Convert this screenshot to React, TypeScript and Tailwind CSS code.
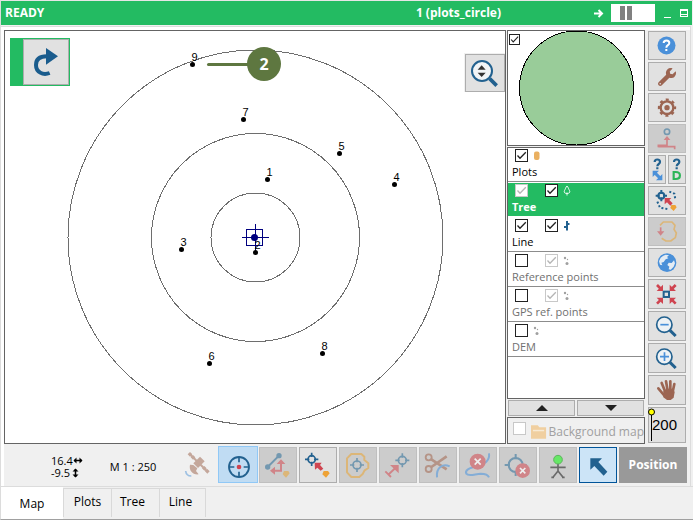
import React, { useId } from "react";
import { FaWrench } from "react-icons/fa";

const BLUE = "#22618f";
const RED = "#cf4450";
const ORANGE = "#eea236";
const SKY = "#4a90d9";
const BROWN = "#9c6552";

type Kids = { children?: React.ReactNode };

/* ---------- building blocks ---------- */

function Icon({ box, children }: { box: string } & Kids) {
  return (
    <svg viewBox={box} className="h-full w-full" fill="none" aria-hidden="true">
      {children}
    </svg>
  );
}

function SideButton({ label, off, size = "h-[29px]", children }: { label: string; off?: boolean; size?: string } & Kids) {
  return (
    <button
      aria-label={label}
      disabled={off}
      className={`flex min-w-0 flex-1 shrink-0 items-center justify-center border ${size} ${
        off ? "border-[#bfbfbf] bg-[#cccccc]" : "border-[#adadad] bg-[#e1e1e1]"
      }`}
    >
      {children}
    </button>
  );
}

function ToolButton({ label, off, children }: { label: string; off?: boolean } & Kids) {
  return (
    <button
      aria-label={label}
      disabled={off}
      className={`h-9 w-[38px] border ${off ? "border-[#bfbfbf] bg-[#cccccc]" : "border-[#adadad] bg-[#e1e1e1]"}`}
    >
      {children}
    </button>
  );
}

function Cross({ x, y, r, t, w = 5, color = BLUE }: { x: number; y: number; r: number; t: number; w?: number; color?: string }) {
  return (
    <g stroke={color} strokeWidth={w}>
      <circle cx={x} cy={y} r={r} />
      <path d={`M${x} ${y - t}V${y - r + 4}M${x} ${y + r - 4}V${y + t}M${x - t} ${y}H${x - r + 4}M${x + r - 4} ${y}H${x + t}`} />
    </g>
  );
}

function Check({ id, label, checked, faded, small }: { id?: string; label?: string; checked?: boolean; faded?: boolean; small?: boolean }) {
  return (
    <span className={`grid shrink-0 ${small ? "size-[11px]" : "size-[13px]"}`}>
      <input
        id={id}
        aria-label={label}
        type="checkbox"
        defaultChecked={checked}
        disabled={faded}
        className={`peer col-start-1 row-start-1 h-full w-full appearance-none border bg-white ${
          faded ? "border-[#c8c8c8]" : "border-[#222222]"
        }`}
      />
      <svg viewBox="0 0 13 13" className="pointer-events-none invisible col-start-1 row-start-1 peer-checked:visible" fill="none">
        <path d="M2.5 6.5L5 9.3L10.8 3.2" stroke={faded ? "#b5b5b5" : "#222222"} strokeWidth="1.3" />
      </svg>
    </span>
  );
}

/* ---------- title bar ---------- */

function TitleBar() {
  return (
    <header className="mr-px flex h-6 items-center bg-[#23bb62] pr-1 pl-1 text-xs leading-4 font-bold text-white">
      <h1>READY</h1>
      <span className="ml-auto">1 (plots_circle)</span>
      <svg viewBox="0 0 10 9" className="ml-[93px] h-[9px] w-2.5" fill="none">
        <path d="M0 4.5H8M4.5 1L8 4.5L4.5 8" stroke="white" strokeWidth="2" />
      </svg>
      <button aria-label="Pause" className="ml-[7px] flex h-[18px] w-11 gap-0.5 bg-white py-0.5 pl-[9px]">
        <span className="h-full w-[5px] bg-[#808080]" />
        <span className="h-full w-[5px] bg-[#808080]" />
      </button>
      <button aria-label="Minimise" className="ml-[9px] flex h-[9px] w-[7px] items-end">
        <span className="h-px w-full bg-white" />
      </button>
      <button aria-label="Restore" className="ml-[9px] h-2 w-2 border border-t-2 border-white">
        <span className="mt-px block h-px w-full bg-white" />
      </button>
    </header>
  );
}

/* ---------- map ---------- */

const trees = [
  { n: 9, x: 187.5, y: 33.5 },
  { n: 7, x: 238.5, y: 88.5 },
  { n: 1, x: 262.5, y: 148.5 },
  { n: 5, x: 334.5, y: 122.5 },
  { n: 4, x: 389.5, y: 153.5 },
  { n: 3, x: 176.5, y: 218.5 },
  { n: 2, x: 250.5, y: 221.5 },
  { n: 6, x: 204.5, y: 332.5 },
  { n: 8, x: 317.5, y: 322.5 },
];

function MapView() {
  return (
    <main className="relative min-w-0 flex-1 border border-[#646464] bg-white">
      <svg viewBox="0 0 500 412" className="h-full w-full" fill="none">
        <g stroke="#6e6e6e" shapeRendering="crispEdges">
          <circle cx="250.5" cy="206.5" r="44.5" />
          <circle cx="250.5" cy="206.5" r="104" />
          <circle cx="250.5" cy="206.5" r="187.5" />
        </g>
        <g stroke="#00007f">
          <path d="M237 206.5H264M250.5 193V220" />
          <rect x="241.5" y="198.5" width="16" height="16" />
        </g>
        <circle cx="249.5" cy="206.5" r="3.5" fill="#00007f" />
        {trees.map((t) => (
          <g key={t.n} fill="black">
            <circle cx={t.x} cy={t.y} r="2.5" />
            <text x={t.x + 2} y={t.y - 3.5} textAnchor="middle" className="font-['Liberation_Sans',sans-serif] text-[11px]">
              {t.n}
            </text>
          </g>
        ))}
        <path d="M203.5 33.5H245" stroke="#5e7740" strokeWidth="3" strokeLinecap="round" />
        <circle cx="259" cy="33" r="17" fill="#5e7740" />
        <text x="259" y="39" textAnchor="middle" fill="white" className="text-base font-bold">
          2
        </text>
      </svg>

      <div className="absolute top-[7px] left-[5px] bg-[#23bb62] py-px pr-px pl-[13px]">
        <button aria-label="Redo" className="block h-[46px] w-[46px] border border-[#adadad] bg-[#e1e1e1]">
          <Icon box="72 120 132 132">
            <path d="M149 219C128 227 108 216 108 195C108 176 120 169 140 169" stroke="#1a5c8d" strokeWidth="12" />
            <path d="M138 144L174 169L138 194Z" fill="#1a5c8d" />
          </Icon>
        </button>
      </div>

      <div className="absolute top-[22px] right-0 bg-[#f0f0f0] pt-px pl-px">
        <button aria-label="Zoom to layer" className="block h-[38px] w-10 border border-[#adadad] bg-[#e1e1e1]">
          <Icon box="198 165 114 108">
            <circle cx="246" cy="213" r="30" stroke={BLUE} strokeWidth="6" fill="#f1f4f6" />
            <path d="M269 236L290 257" stroke={BLUE} strokeWidth="11" />
            <path d="M233 209L245 196L257 209ZM233 218L245 231L257 218Z" fill="#333333" />
          </Icon>
        </button>
      </div>
    </main>
  );
}

/* ---------- layer panel ---------- */

function PlotGlyph() {
  return (
    <svg viewBox="0 0 8 11" className="h-[11px] w-2">
      <rect x="1" y="1.5" width="5.5" height="8.5" rx="2" fill="#eab060" />
    </svg>
  );
}
function TreeGlyph() {
  return (
    <svg viewBox="0 0 8 11" className="h-[11px] w-2" fill="none" stroke="white">
      <path d="M4 1C2.5 2.5 2.5 4 1.5 5.5C.5 7.5 2 8.5 4 8.5C6 8.5 7.5 7.5 6.5 5.5C5.5 4 5.5 2.5 4 1ZM4 7.5V10.5" strokeWidth=".9" />
    </svg>
  );
}
function LineGlyph() {
  return (
    <svg viewBox="0 0 8 11" className="h-[11px] w-2" fill="none" stroke={BLUE}>
      <path d="M4 1V10.5" strokeWidth="2" />
      <path d="M1 7H4M4 4H6.5" strokeWidth="2" />
    </svg>
  );
}
function DotsGlyph() {
  return (
    <svg viewBox="0 0 8 11" className="h-[11px] w-2" fill="#a0a0a0">
      <circle cx="2" cy="3" r="1.2" />
      <circle cx="4.5" cy="4.5" r=".7" />
      <circle cx="4" cy="8.5" r="1.5" />
    </svg>
  );
}

type Layer = {
  name: string;
  shown?: boolean;
  locked?: boolean;
  labels?: "on" | "faded";
  current?: boolean;
  dim?: boolean;
  glyph: React.ReactNode;
};

const layers: Layer[] = [
  { name: "Plots", shown: true, glyph: <PlotGlyph /> },
  { name: "Tree", shown: true, locked: true, labels: "on", current: true, glyph: <TreeGlyph /> },
  { name: "Line", shown: true, labels: "on", glyph: <LineGlyph /> },
  { name: "Reference points", labels: "faded", dim: true, glyph: <DotsGlyph /> },
  { name: "GPS ref. points", labels: "faded", dim: true, glyph: <DotsGlyph /> },
  { name: "DEM", dim: true, glyph: <DotsGlyph /> },
];

function LayerRow({ layer }: { layer: Layer }) {
  const id = useId();
  return (
    <li
      className={`h-[35px] pl-[7px] first:h-[34px] first:pt-px ${
        layer.current ? "border-y border-white bg-[#23bb62] pt-px font-bold text-white" : "border-b border-[#8c8c8c] pt-0.5"
      } ${layer.dim ? "text-[#707070]" : ""}`}
    >
      <div className="flex h-[15px] items-start">
        <Check id={id} checked={layer.shown} faded={layer.locked} />
        {layer.labels && (
          <span className="ml-[17px]">
            <Check label={`${layer.name} labels`} checked faded={layer.labels === "faded"} />
          </span>
        )}
        <span className="mt-px ml-[5px]">{layer.glyph}</span>
      </div>
      <label htmlFor={id} className="-ml-[3px] block text-[11px] leading-4">
        {layer.name}
      </label>
    </li>
  );
}

function LayerPanel() {
  return (
    <aside className="flex w-[138px] shrink-0 flex-col gap-px">
      <div className="flex h-[116px] items-start border border-[#646464] bg-white">
        <span className="mt-[3px] ml-px">
          <Check label="Show overview" checked small />
        </span>
        <svg viewBox="0 0 116 114" className="-ml-px h-[114px] w-[116px]">
          <circle cx="57.5" cy="57" r="57" fill="#99cc99" stroke="black" shapeRendering="crispEdges" />
        </svg>
      </div>
      <ul className="flex-1 border border-[#646464] bg-white">
        {layers.map((l) => (
          <LayerRow key={l.name} layer={l} />
        ))}
      </ul>
      <div className="flex gap-0.5 px-px">
        <button aria-label="Move up" className="flex h-4 flex-1 items-center justify-center border border-[#adadad] bg-[#e1e1e1]">
          <svg viewBox="0 0 12 6" className="h-1.5 w-3">
            <path d="M0 6L6 0L12 6Z" fill="#222222" />
          </svg>
        </button>
        <button aria-label="Move down" className="flex h-4 flex-1 items-center justify-center border border-[#adadad] bg-[#e1e1e1]">
          <svg viewBox="0 0 12 6" className="h-1.5 w-3">
            <path d="M0 0L6 6L12 0Z" fill="#222222" />
          </svg>
        </button>
      </div>
      <div className="flex h-[27px] items-start border border-[#646464] pt-1 pl-[5px] text-[#a0a0a0]">
        <Check id="background" faded />
        <svg viewBox="0 0 16 14" className="mt-[3px] ml-[5px] h-3.5 w-4">
          <path d="M0 0H7L8.5 2H15.5V14H0Z" fill="#f0cfa0" />
          <path d="M2 5.5H13.5" stroke="#f8ead4" strokeWidth="1.5" />
        </svg>
        <label htmlFor="background" className="mt-0.5 ml-0.5 leading-4 whitespace-nowrap">
          Background map
        </label>
      </div>
    </aside>
  );
}

/* ---------- right tool column ---------- */

function SideTools() {
  return (
    <nav aria-label="Map tools" className="flex w-[38px] shrink-0 flex-col pt-px">
      <div className="flex flex-col gap-0.5">
        <div className="flex">
          <SideButton label="Help">
            <Icon box="15 18 108 81">
              <circle cx="67.5" cy="58.5" r="27" fill={SKY} />
              <path d="M59 51C59 41 76 41 76 51C76 58 67 57 67 65M67 69V75" stroke="white" strokeWidth="6" />
            </Icon>
          </SideButton>
        </div>
        <div className="flex">
          <SideButton label="Settings">
            <FaWrench size={18} color={BROWN} />
          </SideButton>
        </div>
        <div className="flex">
          <SideButton label="Configuration">
            <Icon box="15 204 108 81">
              <g stroke={BROWN}>
                <circle cx="69" cy="245" r="19" strokeWidth="7" />
                <circle cx="69" cy="245" r="24" strokeWidth="7" strokeDasharray="9 9.85" strokeDashoffset="4.5" />
              </g>
              <circle cx="69" cy="245" r="8" fill={BROWN} />
            </Icon>
          </SideButton>
        </div>
        <div className="flex">
          <SideButton label="Snap to node" off>
            <Icon box="15 297 108 81">
              <circle cx="69" cy="317" r="8" stroke="#7398b0" strokeWidth="5" />
              <path d="M43 364V358H69V339M43 362H92V370" stroke="#d08488" strokeWidth="5" />
              <path d="M59 342L69 330L79 342Z" fill="#d08488" />
            </Icon>
          </SideButton>
        </div>
        <div className="flex gap-0.5">
          <SideButton label="Measure distance">
            <Icon box="15 390 48 81">
              <path d="M32 408C32 398 48 398 48 408C48 415 40 413 40 421M40 424V430" stroke={BLUE} strokeWidth="6.5" />
              <path d="M26 434H45L26 453ZM55 463V444L36 463Z" fill={SKY} />
              <path d="M32 440L49 457" stroke={SKY} strokeWidth="9" />
            </Icon>
          </SideButton>
          <SideButton label="Measure diameter">
            <Icon box="75 390 48 81">
              <path d="M90 408C90 398 106 398 106 408C106 415 98 413 98 421M98 424V430" stroke={BLUE} strokeWidth="6.5" />
              <path d="M89 438V459H95C112 459 112 438 95 438Z" stroke="#2cb558" strokeWidth="6.5" />
            </Icon>
          </SideButton>
        </div>
        <div className="flex">
          <SideButton label="Select by position">
            <Icon box="447 141 108 81">
              <Cross x={484} y={167} r={9} t={17} w={6} />
              <path d="M508 155L523 161L526 178M472 185L480 203L502 207" stroke={BLUE} strokeWidth="6" strokeDasharray="6 6" />
              <path d="M494 174H514L508 180L518 190L511 197L501 187L494 193Z" fill={RED} />
              <path d="M514 195H526L530 202L521 213L511 204Z" fill={ORANGE} />
            </Icon>
          </SideButton>
        </div>
        <div className="flex">
          <SideButton label="Add to polygon" off>
            <Icon box="447 234 108 81">
              <path d="M480 256L490 246H516L525 256L522 268L529 279L526 293L512 303H498L485 295" stroke="#dcb678" strokeWidth="5" strokeLinejoin="round" />
              <path d="M482 262V276" stroke="#d08488" strokeWidth="5" />
              <path d="M471 274H493L482 287Z" fill="#d08488" />
            </Icon>
          </SideButton>
        </div>
        <div className="flex">
          <SideButton label="Whole world">
            <Icon box="447 327 108 81">
              <circle cx="501" cy="368" r="28" fill={SKY} />
              <path
                d="M497 344L507 346L501 351L505 355L497 358L491 366L484 368L487 376L480 374L477 364L482 353L490 347ZM522 361L525 370L521 380L512 389L506 388L508 380L502 375L506 368L515 369Z"
                fill="#e4ecf4"
              />
            </Icon>
          </SideButton>
        </div>
        <div className="flex">
          <SideButton label="Centre view" size="h-[30px]">
            <Icon box="447 60 108 84">
              <rect x="491" y="95" width="16" height="16" stroke={BLUE} strokeWidth="6" />
              <path d="M471 75L483 87M527 75L515 87M471 131L483 119M527 131L515 119" stroke={RED} strokeWidth="8" />
              <path d="M489 74V93H470ZM509 74V93H528ZM489 132V113H470ZM509 132V113H528Z" fill={RED} />
            </Icon>
          </SideButton>
        </div>
        <div className="flex">
          <SideButton label="Zoom out" size="h-[30px]">
            <Icon box="447 156 108 84">
              <circle cx="493" cy="194" r="23" stroke={BLUE} strokeWidth="5" fill="#eef2f5" />
              <path d="M510 211L527 228" stroke={BLUE} strokeWidth="9" />
              <path d="M481 194H506" stroke={SKY} strokeWidth="5" />
            </Icon>
          </SideButton>
        </div>
        <div className="flex">
          <SideButton label="Zoom in" size="h-[30px]">
            <Icon box="447 252 108 84">
              <circle cx="493" cy="290" r="23" stroke={BLUE} strokeWidth="5" fill="#eef2f5" />
              <path d="M510 307L527 324" stroke={BLUE} strokeWidth="9" />
              <path d="M480 290H507M493.5 277V303" stroke={SKY} strokeWidth="5" />
            </Icon>
          </SideButton>
        </div>
        <div className="flex">
          <SideButton label="Pan" size="h-[30px]">
            <Icon box="447 -12 108 84">
              <path d="M485 9L496 36M498 4L503 32M511 4V32M523 12L518 36M475 25L494 48" stroke={BROWN} strokeWidth="8" strokeLinecap="round" />
              <path d="M490 34L500 26H518L524 36L521 53L512 60H501L490 52Z" fill={BROWN} />
            </Icon>
          </SideButton>
        </div>
        <button className="relative h-9 border border-[#adadad] bg-[#e1e1e1] pl-[3px] text-left font-['Liberation_Sans',sans-serif] text-[15px]">
          <svg viewBox="0 0 8 34" className="absolute top-0 -left-px h-[34px] w-2">
            <path d="M3.5 4V33" stroke="black" />
            <circle cx="3.5" cy="4" r="3" fill="#ffff00" stroke="black" />
          </svg>
          200
        </button>
      </div>
    </nav>
  );
}

/* ---------- bottom tool bar ---------- */

function BottomBar() {
  return (
    <div className="flex items-center gap-0.5 pt-0.5 pr-[3px] pb-[3px]">
      <div className="flex min-w-0 flex-1 items-center pt-1 pl-[47px]">
        <div className="text-[11px] leading-3">
          <div className="flex items-center">
            16.4
            <svg viewBox="0 0 10 7" className="h-[7px] w-2.5" fill="none" stroke="black">
              <path d="M1 3.5H9" strokeWidth="1.5" />
              <path d="M3.5 .5L.5 3.5L3.5 6.5ZM6.5 .5L9.5 3.5L6.5 6.5Z" fill="black" stroke="none" />
            </svg>
          </div>
          <div className="flex items-center">
            -9.5
            <svg viewBox="0 0 7 10" className="ml-0.5 h-2.5 w-[7px]" fill="none" stroke="black">
              <path d="M3.5 1V9" strokeWidth="1.5" />
              <path d="M.5 3.5L3.5 .5L6.5 3.5ZM.5 6.5L3.5 9.5L6.5 6.5Z" fill="black" stroke="none" />
            </svg>
          </div>
        </div>
        <span className="ml-[27px] text-[11px] leading-4 whitespace-nowrap">M 1 : 250</span>
      </div>
      <button aria-label="GPS" disabled className="mr-[3px] size-[30px]">
        <Icon box="9 33 90 90">
          <g fill="#c4a79b">
            <path d="M30 39L37 46L30 53L23 46ZM39 48L46 55L39 62L32 55ZM73 81L80 88L73 95L66 88ZM82 90L89 97L82 104L75 97Z" />
            <path d="M60 53L74 67L54 87L40 73Z" />
            <path d="M30 77C26 94 38 108 56 106L48 96L52 88L40 78Z" />
          </g>
          <path d="M32 48L80 95" stroke="#c4a79b" strokeWidth="6" />
          <path d="M17 96C18 105 24 111 34 111" stroke="#9dc0e2" strokeWidth="5" />
        </Icon>
      </button>
      <div className="flex items-end gap-0.5">
        <button aria-label="Aim" className="-mr-px h-[37px] w-10 border border-[#90c8f6] bg-[#c0dcf3]">
          <Icon box="117 21 114 105">
            <circle cx="177" cy="81" r="30" stroke={BLUE} strokeWidth="5.5" />
            <path d="M177 51V67M177 95V111M147 81H163M191 81H207" stroke={BLUE} strokeWidth="5" />
            <circle cx="177" cy="81" r="7" fill={RED} />
          </Icon>
        </button>
        <ToolButton label="Move node" off>
          <Icon box="240 24 108 102">
            <path d="M263 81L297 47" stroke="#7398b0" strokeWidth="6" />
            <circle cx="263" cy="81" r="8" fill="#7398b0" />
            <circle cx="297" cy="47" r="8" fill="#7398b0" />
            <path d="M280 92H303V68" stroke="#d08488" strokeWidth="6" />
            <path d="M285 80V104L270 92ZM290 72H316L303 58Z" fill="#d08488" />
            <path d="M312 93H325L329 100L318 113L308 103Z" fill="#dcb678" />
          </Icon>
        </ToolButton>
        <ToolButton label="Add tree">
          <Icon box="360 24 108 102">
            <Cross x={395} y={58} r={11} t={20} />
            <path d="M404 68H425L420 75L430 86L422 92L412 83L405 89Z" fill={RED} />
            <path d="M431 93H444L449 100L438 113L427 103Z" fill={ORANGE} />
          </Icon>
        </ToolButton>
        <ToolButton label="Select in polygon" off>
          <Icon box="480 24 108 102">
            <path d="M514 42H544L553 50V60L565 70V84L554 91L548 102L538 111H514L501 97V55Z" stroke="#dcb678" strokeWidth="6" strokeLinejoin="round" />
            <Cross x={531} y={75} r={12} t={21} color="#7398b0" />
          </Icon>
        </ToolButton>
        <ToolButton label="Move to position" off>
          <Icon box="30 24 108 102">
            <Cross x={97} y={61} r={12} t={21} color="#7398b0" />
            <path d="M54 105L76 84M46 94L63 111" stroke="#d08488" strokeWidth="5.5" />
            <path d="M60 75H86V100Z" fill="#d08488" />
          </Icon>
        </ToolButton>
        <ToolButton label="Split line" off>
          <Icon box="150 24 108 102">
            <g stroke="#b59487">
              <circle cx="176" cy="52" r="9" strokeWidth="5.5" />
              <circle cx="176" cy="87" r="9" strokeWidth="5.5" />
              <path d="M184 58L230 88M184 81L230 49" strokeWidth="8" />
            </g>
            <path d="M201 112C198 80 220 70 239 79" stroke="#84add6" strokeWidth="6" />
          </Icon>
        </ToolButton>
        <ToolButton label="Delete line" off>
          <Icon box="270 24 108 102">
            <path d="M357 40C360 62 345 70 325 78C295 83 284 92 289 101C295 110 315 102 332 101C344 101 354 104 357 112" stroke="#84add6" strokeWidth="6" />
            <circle cx="323" cy="65" r="24" fill="#d08488" />
            <path d="M314 56L332 74M332 56L314 74" stroke="#eee" strokeWidth="5" />
          </Icon>
        </ToolButton>
        <ToolButton label="Delete tree" off>
          <Icon box="390 24 108 102">
            <Cross x={437} y={75} r={21} t={33} w={6} color="#7398b0" />
            <circle cx="458" cy="92" r="22" fill="#d08488" />
            <path d="M450 84L466 100M466 84L450 100" stroke="#eee" strokeWidth="5" />
          </Icon>
        </ToolButton>
        <ToolButton label="Person position" off>
          <Icon box="510 24 108 102">
            <path d="M564 66V95M541 82H587M564 93L549 112M564 93L579 112M544 112H552M576 112H584" stroke="#6a6a6a" strokeWidth="5" />
            <circle cx="564" cy="59" r="13" fill="#66e866" stroke="#5fb45f" strokeWidth="3" />
          </Icon>
        </ToolButton>
        <button aria-label="Select" className="h-9 w-[38px] border border-[#005499] bg-[#cce4f7]">
          <Icon box="240 204 108 102">
            <path d="M271 235H306L295 246L322 275L311 287L283 258L271 269Z" fill={BLUE} />
          </Icon>
        </button>
        <button className="h-9 w-[68px] bg-[#999999] text-xs font-bold text-white">Position</button>
      </div>
    </div>
  );
}

/* ---------- page tabs ---------- */

function Tabs() {
  return (
    <div role="tablist" className="flex h-[33px] border-t border-[#dcdcdc] leading-4">
      <button role="tab" aria-selected="true" className="w-[62px] bg-white pt-0.5">
        Map
      </button>
      <button role="tab" aria-selected="false" className="mt-px mb-0.5 w-[49px] border border-b-0 border-[#d9d9d9] pb-0.5">
        Plots
      </button>
      <button role="tab" aria-selected="false" className="mt-px mb-0.5 w-12 border-t border-r border-[#d9d9d9] pr-1.5 pb-0.5">
        Tree
      </button>
      <button role="tab" aria-selected="false" className="mt-px mb-0.5 w-[46px] border-t border-r border-[#d9d9d9] pr-1 pb-0.5">
        Line
      </button>
    </div>
  );
}

export default function App() {
  return (
    <div className="flex min-h-screen flex-col border-t border-b border-l border-t-[#e6e6e6] border-b-[#a0a0a0] border-l-[#dcdcdc] bg-[#f0f0f0] font-['Open_Sans',sans-serif] text-xs text-black">
      <TitleBar />
      <div className="mt-px mr-0.5 flex flex-1 flex-col border-t border-r border-[#dcdcdc] bg-white pt-[3px] pl-[3px]">
        <div className="flex flex-1 flex-col bg-[#f0f0f0]">
          <div className="flex flex-1">
            <MapView />
            <div className="ml-px flex gap-[3px] pr-1">
              <LayerPanel />
              <SideTools />
            </div>
          </div>
          <BottomBar />
        </div>
      </div>
      <Tabs />
    </div>
  );
}
